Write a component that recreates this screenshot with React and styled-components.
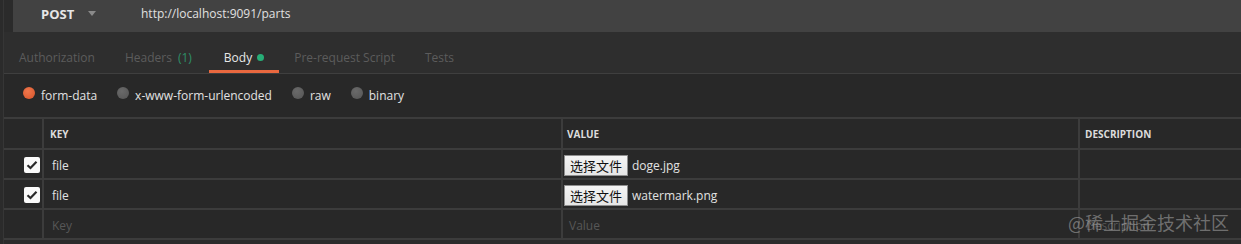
import React from 'react';
import styled, { createGlobalStyle } from 'styled-components';

const GlobalStyle = createGlobalStyle`
  html, body {
    margin: 0;
    padding: 0;
    background: #2b2b2b;
    font-family: "Open Sans", "Noto Sans", sans-serif;
    overflow: hidden;
  }
`;

const Page = styled.div`
  position: relative;
  width: 1241px;
  height: 244px;
  background: #2b2b2b;
`;

const Frame = styled.div`
  margin-left: 3px;
  border-left: 1px solid #363636;
  height: 100%;
`;

const RequestBar = styled.div`
  margin-left: 9px;
  height: 32px;
  padding-bottom: 5px;
  box-sizing: border-box;
  background: #424242;
  display: flex;
  align-items: center;
`;

const Method = styled.div`
  display: flex;
  align-items: center;
  width: 100px;
  padding-left: 28px;
  color: #e6e6e6;
  font-size: 13px;
  font-weight: 700;
`;

const Caret = styled.span`
  margin-left: 14px;
  width: 0;
  height: 0;
  border-left: 4px solid transparent;
  border-right: 4px solid transparent;
  border-top: 5px solid #8a8a8a;
`;

const Url = styled.div`
  color: #e0e0e0;
  font-size: 12px;
`;

const Tabs = styled.div`
  height: 41px;
  background: #2e2e2e;
  border-bottom: 1px solid #3f3f3f;
  display: flex;
  align-items: stretch;
`;

const Tab = styled.div`
  position: relative;
  display: flex;
  align-items: center;
  padding: 9px 15px 0;
  font-size: 12px;
  color: ${(p) => (p.$active ? '#e8e8e8' : '#5c5c5c')};
  &::after {
    content: '';
    display: ${(p) => (p.$active ? 'block' : 'none')};
    position: absolute;
    left: 0;
    right: 0;
    bottom: 0;
    height: 3px;
    background: #e9683f;
  }
`;

const Count = styled.span`
  color: #2f8f68;
  margin-left: 6px;
  margin-right: 2px;
`;

const Dot = styled.span`
  width: 7px;
  height: 7px;
  border-radius: 50%;
  background: #27ae77;
  margin-left: 5px;
  margin-top: 1px;
`;

const BodyTypes = styled.div`
  height: 43px;
  background: #282828;
  display: flex;
  align-items: center;
  padding-left: 19px;
  gap: 20px;
`;

const RadioItem = styled.label`
  display: flex;
  align-items: center;
  gap: 6px;
  font-size: 12px;
  color: #e2e2e2;
`;

const Radio = styled.span`
  width: 12px;
  height: 12px;
  border-radius: 50%;
  margin-top: -5px;
  background: ${(p) =>
    p.$checked
      ? 'radial-gradient(circle at 40% 35%, #f0774c, #d7542a)'
      : 'radial-gradient(circle at 40% 35%, #6a6a6a, #555)'};
`;

const Table = styled.div`
  display: grid;
  grid-template-columns: 40px 519px 517px 1fr;
  border-top: 2px solid #3c3c3c;
  background: #282828;
`;

const Cell = styled.div`
  height: ${(p) => (p.$head ? '29px' : '26px')};
  border-right: 2px solid #3c3c3c;
  border-bottom: 2px solid #3c3c3c;
  display: flex;
  align-items: center;
  padding-left: ${(p) => p.$pad || 8}px;
  padding-top: ${(p) => (p.$head ? 0 : 2)}px;
  box-sizing: content-box;
  font-size: ${(p) => (p.$head ? '10px' : '12px')};
  font-weight: ${(p) => (p.$head ? 700 : 400)};
  color: ${(p) => (p.$muted ? '#575757' : p.$head ? '#dcdcdc' : '#e2e2e2')};
  &:nth-child(4n) {
    border-right: none;
  }
`;

const CheckCell = styled(Cell)`
  justify-content: flex-end;
  padding-left: 0;
  padding-right: 2px;
`;

const Checkbox = styled.span`
  width: 16px;
  height: 16px;
  border-radius: 2px;
  background: #fafafa;
  display: flex;
  align-items: center;
  justify-content: center;
`;

const FileButton = styled.span`
  height: 19px;
  padding: 0 5px;
  margin-right: 4px;
  border: 1px solid #8f8f8f;
  background: linear-gradient(#f4f4f4, #e6e6e6);
  color: #111;
  font-family: "Noto Sans CJK SC", sans-serif;
  font-size: 13px;
  line-height: 19px;
`;

const Watermark = styled.div`
  position: absolute;
  left: 1068px;
  top: 209px;
  font-family: "Noto Sans CJK SC", sans-serif;
  font-size: 18px;
  color: rgba(200, 200, 200, 0.45);
  pointer-events: none;
`;

const Check = () => (
  <Checkbox>
    <svg width="12" height="10" viewBox="0 0 12 10">
      <path d="M1.5 5.2 L4.5 8 L10.5 1.8" fill="none" stroke="#2a2a2a" strokeWidth="2.2" />
    </svg>
  </Checkbox>
);

const rows = [
  { key: 'file', file: 'doge.jpg' },
  { key: 'file', file: 'watermark.png' },
];

export default function App() {
  return (
    <Page>
      <GlobalStyle />
      <Frame>
        <RequestBar>
          <Method>
            POST
            <Caret />
          </Method>
          <Url>http://localhost:9091/parts</Url>
        </RequestBar>
        <Tabs>
          <Tab>Authorization</Tab>
          <Tab>
            Headers<Count>(1)</Count>
          </Tab>
          <Tab $active>
            Body<Dot />
          </Tab>
          <Tab>Pre-request Script</Tab>
          <Tab>Tests</Tab>
        </Tabs>
        <BodyTypes>
          <RadioItem>
            <Radio $checked />
            form-data
          </RadioItem>
          <RadioItem>
            <Radio />
            x-www-form-urlencoded
          </RadioItem>
          <RadioItem>
            <Radio />
            raw
          </RadioItem>
          <RadioItem>
            <Radio />
            binary
          </RadioItem>
        </BodyTypes>
        <Table>
          <Cell $head />
          <Cell $head $pad={6}>KEY</Cell>
          <Cell $head $pad={4}>VALUE</Cell>
          <Cell $head $pad={5}>DESCRIPTION</Cell>
          {rows.map((r, i) => (
            <React.Fragment key={i}>
              <CheckCell>
                <Check />
              </CheckCell>
              <Cell>{r.key}</Cell>
              <Cell $pad={1}>
                <FileButton>选择文件</FileButton>
                {r.file}
              </Cell>
              <Cell />
            </React.Fragment>
          ))}
          <Cell />
          <Cell $muted>Key</Cell>
          <Cell $muted $pad={6}>Value</Cell>
          <Cell $muted $pad={6}>Description</Cell>
        </Table>
      </Frame>
      <Watermark>@稀土掘金技术社区</Watermark>
    </Page>
  );
}
